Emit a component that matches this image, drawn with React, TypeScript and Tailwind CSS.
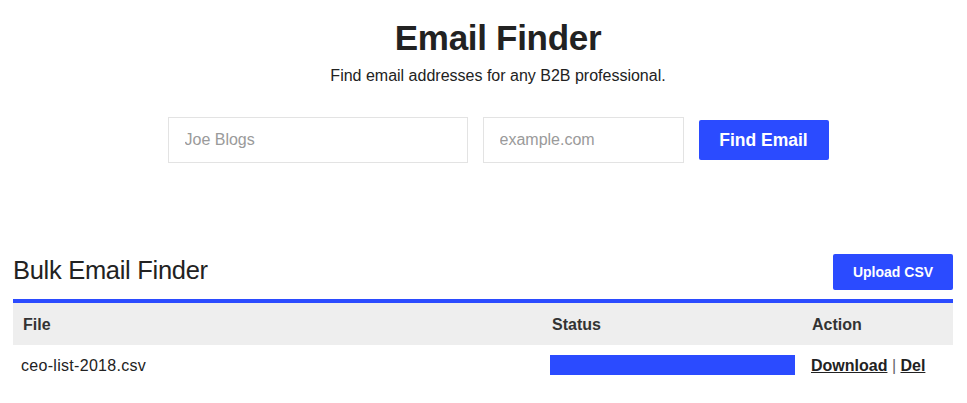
const files = [{ name: 'ceo-list-2018.csv', progress: 100 }]

export default function App() {
  return (
    <div className="min-h-screen bg-white text-[#222] font-['Liberation_Sans',Arial,sans-serif]">
      {/* Single finder */}
      <section className="pl-[29px] pt-[16px] text-center">
        <h1 className="text-[35px] leading-[44px] font-bold tracking-[-0.3px]">Email Finder</h1>
        <p className="mt-[6px] text-[16px] leading-[20px]">
          Find email addresses for any B2B professional.
        </p>
        <form className="mt-[31px] flex items-center justify-center gap-[15px]" onSubmit={(e) => e.preventDefault()}>
          <input
            placeholder="Joe Blogs"
            className="w-[300px] h-[46px] border border-[#e3e3e3] px-[16px] text-[16px] placeholder:text-[#9a9a9a] outline-none"
          />
          <input
            placeholder="example.com"
            className="w-[201px] h-[46px] border border-[#e3e3e3] px-[16px] text-[16px] placeholder:text-[#9a9a9a] outline-none"
          />
          <button className="w-[130px] h-[40px] rounded-[2px] bg-[#2b4bff] text-white text-[17.5px] font-bold">
            Find Email
          </button>
        </form>
      </section>

      {/* Bulk finder */}
      <section className="w-[940px] ml-[13px] mt-[91px]">
        <div className="flex items-center justify-between">
          <h2 className="text-[25.5px] leading-[30px] tracking-[-0.3px] -mt-[4px]">Bulk Email Finder</h2>
          <button className="w-[120px] h-[36px] rounded-[2px] bg-[#2b4bff] text-white text-[14px] font-bold">
            Upload CSV
          </button>
        </div>
        <table className="mt-[9px] w-full border-t-4 border-[#2b4bff] text-[16px] text-left">
          <thead className="bg-[#eeeeee] text-[#333]">
            <tr className="h-[44px]">
              <th className="w-[527px] pl-[10px] pt-[2px] font-bold">File</th>
              <th className="w-[261px] pl-[12px] pt-[2px] font-bold">Status</th>
              <th className="pl-[11px] pt-[2px] font-bold">Action</th>
            </tr>
          </thead>
          <tbody>
            {files.map((f) => (
              <tr key={f.name} className="h-[40px]">
                <td className="pl-[8px] pt-[1px] tracking-[0.3px]">{f.name}</td>
                <td className="pl-[10px] pr-[6px]">
                  <div className="h-[20px] bg-white">
                    <div className="h-full bg-[#2b4bff]" style={{ width: `${f.progress}%` }} />
                  </div>
                </td>
                <td className="pl-[10px] pt-[1px]">
                  <a href="#" className="font-bold underline">Download</a>
                  <span className="text-[#666]"> | </span>
                  <a href="#" className="font-bold underline">Del</a>
                </td>
              </tr>
            ))}
          </tbody>
        </table>
      </section>
    </div>
  )
}
